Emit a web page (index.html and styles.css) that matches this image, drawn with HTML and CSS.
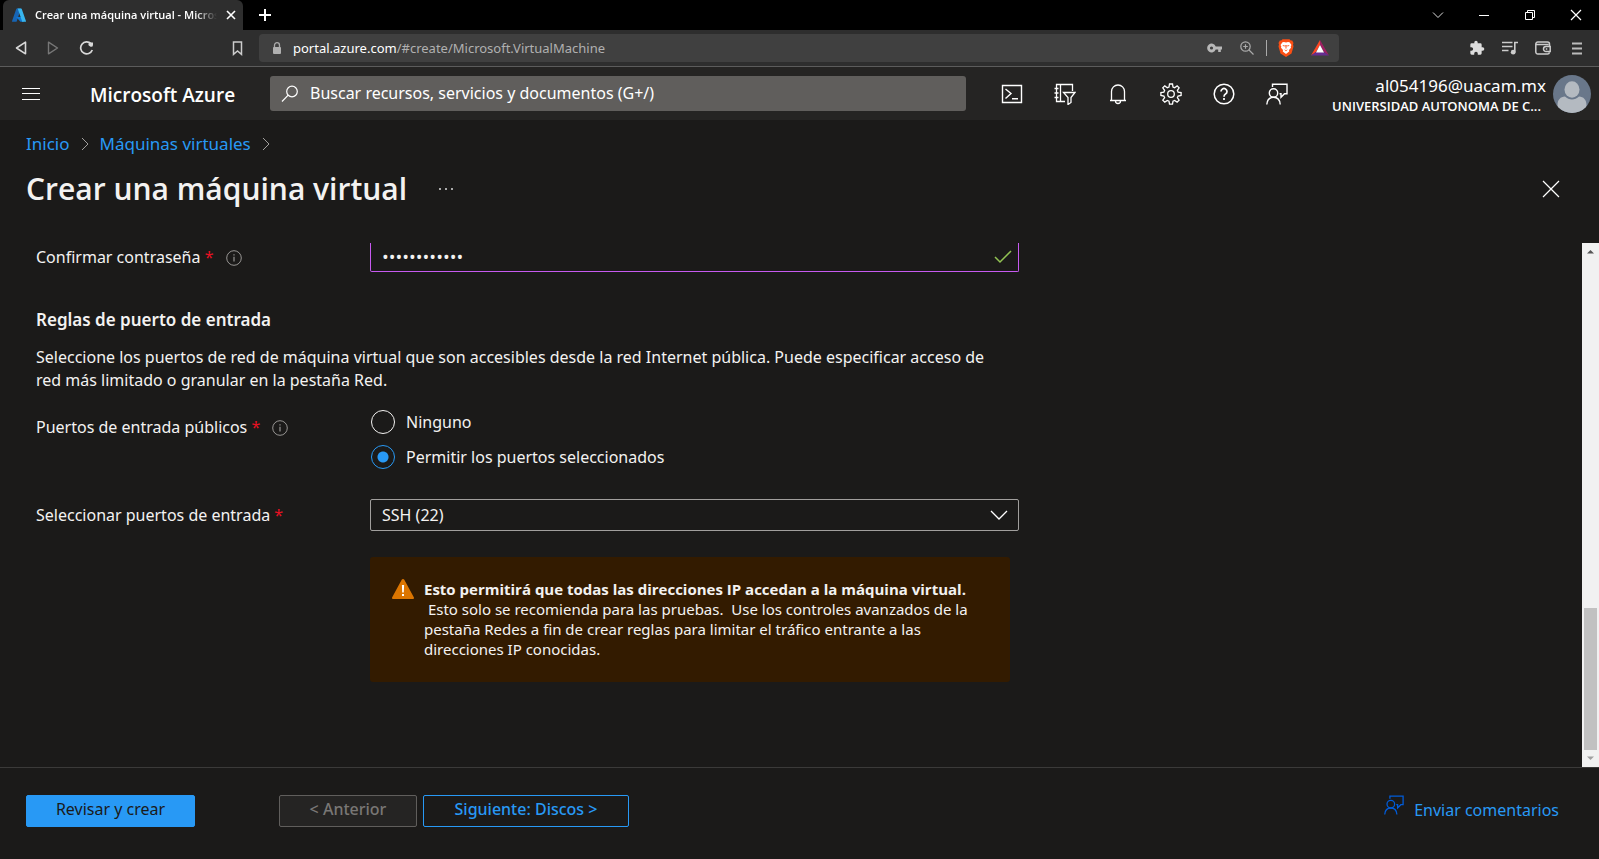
FILE: index.html
```html
<!DOCTYPE html>
<html lang="es">
<head>
<meta charset="utf-8">
<meta name="viewport" content="width=device-width, initial-scale=1">
<title>Crear una máquina virtual - Microsoft Azure</title>
<link rel="stylesheet" href="styles.css">
</head>
<body class="page">
<svg class="symbols" width="0" height="0" aria-hidden="true">
  <symbol id="feedback" viewBox="0 0 22 22">
    <path d="M6.500 4V1.200h14.500v9.500h-2.500l-3.500 3.500v-3.500h-1.500" fill="none" stroke="currentColor" stroke-width="1.400"/>
    <circle cx="7.500" cy="10" r="4.200" fill="none" stroke="currentColor" stroke-width="1.400"/>
    <path d="M.8 21.500c.3-4.500 3-7.200 6.700-7.200s6.400 2.700 6.700 7.200" fill="none" stroke="currentColor" stroke-width="1.400"/>
  </symbol>
  <symbol id="info" viewBox="0 0 16 16">
    <circle cx="8" cy="8" r="7.300" fill="none" stroke="currentColor"/>
    <path d="M8 6.800v4.700M8 4.300v1.300" stroke="currentColor" stroke-width="1.200"/>
  </symbol>
  <symbol id="chev" viewBox="0 0 8 14"><path d="M1 1l6 6-6 6" fill="none" stroke="currentColor"/></symbol>
</svg>

<div class="tabs">
  <div class="tab">
    <svg width="14" height="14" viewBox="0 0 96 96" aria-hidden="true">
      <path d="M33 4h29L32 92a5 5 0 0 1-4 3H6a5 5 0 0 1-5-7L29 7a5 5 0 0 1 4-3z" fill="#1765b5"/>
      <path d="M72 61H28l30 33h24z" fill="#0f78d4"/>
      <path d="M63 4H36a5 5 0 0 1 4 3l28 81a5 5 0 0 1-4 7h26a5 5 0 0 0 5-7L67 7a5 5 0 0 0-4-3z" fill="#38b5ee"/>
    </svg>
    <span class="tab-title">Crear una máquina virtual - Microsoft Azure</span>
    <button class="icon-btn" aria-label="Cerrar pestaña"><svg width="10" height="10" viewBox="0 0 10 10"><path d="M1 1l8 8M9 1l-8 8" stroke="#fff" stroke-width="1.600"/></svg></button>
  </div>
  <button class="icon-btn new-tab" aria-label="Nueva pestaña"><svg width="12" height="12" viewBox="0 0 12 12"><path d="M6 0v12M0 6h12" stroke="#fff" stroke-width="2"/></svg></button>
  <div class="window-controls">
    <button class="icon-btn" aria-label="Buscar pestañas"><svg width="12" height="8" viewBox="0 0 12 8"><path d="M1 1.500l5 5 5-5" fill="none" stroke="#ddd"/></svg></button>
    <button class="icon-btn" aria-label="Minimizar"><svg width="12" height="12" viewBox="0 0 12 12"><path d="M1 6.500h10" stroke="#fff"/></svg></button>
    <button class="icon-btn" aria-label="Restaurar"><svg width="12" height="12" viewBox="0 0 12 12"><path d="M1.500 3.500h7v7h-7zM3.500 3V1.500h7v7H9" fill="none" stroke="#fff"/></svg></button>
    <button class="icon-btn" aria-label="Cerrar"><svg width="12" height="12" viewBox="0 0 12 12"><path d="M1 1l10 10M11 1L1 11" stroke="#fff" stroke-width="1.200"/></svg></button>
  </div>
</div>

<div class="toolbar">
  <div class="nav">
    <button class="icon-btn" aria-label="Atrás"><svg width="12" height="14" viewBox="0 0 12 14"><path d="M10.500 1.200v11.600L1.500 7z" fill="none" stroke="#d8d8d8" stroke-width="1.600" stroke-linejoin="round"/></svg></button>
    <button class="icon-btn" aria-label="Adelante"><svg width="12" height="14" viewBox="0 0 12 14"><path d="M1.500 1.200v11.600l9-5.800z" fill="none" stroke="#777" stroke-width="1.400" stroke-linejoin="round"/></svg></button>
    <button class="icon-btn" aria-label="Recargar"><svg width="15" height="15" viewBox="0 0 15 15"><path d="M12 2.700A6 6 0 1 0 13.300 9" fill="none" stroke="#d8d8d8" stroke-width="1.700"/><path d="M9.500 4.200a2.200 2.200 0 0 1 2.200-2.600H14v2.300a2 2 0 0 1-2.500 1.800z" fill="#d8d8d8"/></svg></button>
  </div>
  <button class="icon-btn bookmark" aria-label="Añadir marcador"><svg width="11" height="15" viewBox="0 0 11 15"><path d="M1.500 1h8v12.300l-4-3.300-4 3.300z" fill="none" stroke="#ccc" stroke-width="1.500"/></svg></button>
  <div class="address">
    <svg width="10" height="12" viewBox="0 0 10 12" aria-hidden="true"><path d="M2.500 6V3.200a2.500 2.500 0 0 1 5 0V6" fill="none" stroke="#aaa" stroke-width="1.300"/><rect x="1" y="5" width="8" height="7" rx="1" fill="#b0b0b0"/></svg>
    <span class="url"><b class="host">portal.azure.com</b>/#create/Microsoft.VirtualMachine</span>
    <svg width="15" height="10" viewBox="0 0 15 10" aria-hidden="true"><path d="M8.700 3.600H15v2.800h-1.200V9h-2.600V6.400H8.700a4.400 4.400 0 1 1 0-2.800zM4.500 3.400a1.600 1.600 0 1 0 0 3.200 1.600 1.600 0 0 0 0-3.200z" fill="#b8b8b8" fill-rule="evenodd"/></svg>
    <svg class="zoom" width="14" height="14" viewBox="0 0 14 14" aria-hidden="true"><path d="M9 9l4.500 4.500M5.500 3.200v4.600M3.200 5.500h4.600" stroke="#aaa" stroke-width="1.200"/><circle cx="5.500" cy="5.500" r="4.700" fill="none" stroke="#aaa" stroke-width="1.200"/></svg>
    <span class="separator"></span>
    <svg class="shield" width="16" height="18" viewBox="0 0 16 18" aria-hidden="true"><path d="M4.500.3h7l1.200 1.300 1.500-.1L15.500 4l-.5 1.600.5 1.800-2 7-5.500 3.500L2.500 14.400.5 7.400 1 5.600.5 4l1.300-2.500 1.500.1z" fill="#fb4f14"/><path d="M4.500 3.300L6 3l2 .6 2-.6 1.500.3 2 2.700-.8 1.200.3 1.500-2 2.400.2 1.400L8 15l-3.200-2.500.2-1.400L3 8.700l.3-1.500L2.500 6z" fill="#fff"/><path d="M4.300 6l2.600.4L6.200 7.800zM11.700 6l-2.600.4.700 1.400zM7.300 6h1.400l-.3 3.200L8 10l-.4-.8zM6 10.300l2 .9 2-.9-2 1.900z" fill="#fb4f14"/></svg>
    <svg class="bat" width="18" height="16" viewBox="0 0 18 16" aria-hidden="true"><path d="M9 0L0 15.500 5 12l4-7z" fill="#ff4724"/><path d="M9 0l9 15.500-5-3.500-4-7z" fill="#9e1f63"/><path d="M0 15.500h18L13 12H5z" fill="#662d91"/><path d="M9 5l4 7.500H5z" fill="#fff"/></svg>
  </div>
  <div class="extras">
    <button class="icon-btn" aria-label="Extensiones"><svg width="16" height="16" viewBox="0 0 24 24"><path d="M20.500 11H19V7a2 2 0 0 0-2-2h-4V3.500a2.500 2.500 0 0 0-5 0V5H4a2 2 0 0 0-2 2v3.800h1.500a2.700 2.700 0 0 1 0 5.400H2V20a2 2 0 0 0 2 2h3.800v-1.500a2.700 2.700 0 0 1 5.400 0V22H17a2 2 0 0 0 2-2v-4h1.500a2.500 2.500 0 0 0 0-5z" fill="#ddd"/></svg></button>
    <button class="icon-btn" aria-label="Lista de reproducción"><svg width="16" height="14" viewBox="0 0 16 14"><path d="M0 1.500h10.500M0 5.500h10.500M0 9.500h6.500" stroke="#ccc" stroke-width="1.500"/><path d="M12.800 11V1.500H16" fill="none" stroke="#ccc" stroke-width="1.600"/><circle cx="11.200" cy="11.200" r="2.400" fill="#ccc"/></svg></button>
    <button class="icon-btn" aria-label="Cartera"><svg width="16" height="14" viewBox="0 0 16 14"><path d="M14.500 5V3a2 2 0 0 0-2-2H3a2 2 0 0 0-2.200 2v8A2 2 0 0 0 3 13h9.500a2 2 0 0 0 2-1.500M1 3.500h12.500M15.200 5.500H11a2.300 2.300 0 0 0 0 5h4.200zM10.800 8h1.500" fill="none" stroke="#ccc" stroke-width="1.500"/></svg></button>
    <button class="icon-btn menu" aria-label="Menú"><svg width="10" height="13" viewBox="0 0 10 13"><path d="M0 1.500h10M0 6.500h10M0 11.500h10" stroke="#bbb" stroke-width="2"/></svg></button>
  </div>
</div>

<header class="portal">
  <button class="icon-btn" aria-label="Mostrar menú"><svg width="20" height="14" viewBox="0 0 20 14"><path d="M1 1.500h18M1 6.500h18M1 12.500h18" stroke="#fff"/></svg></button>
  <a class="brand" href="#">Microsoft Azure</a>
  <label class="search">
    <svg width="18" height="18" viewBox="0 0 18 18" aria-hidden="true"><circle cx="11" cy="6.500" r="5.300" fill="none" stroke="#fff" stroke-width="1.200"/><path d="M7.200 10.200L1 16.500" stroke="#fff" stroke-width="1.200"/></svg>
    <input class="search-input" type="text" aria-label="Buscar" placeholder="Buscar recursos, servicios y documentos (G+/)">
  </label>
  <nav class="portal-icons">
    <button class="icon-btn" aria-label="Cloud Shell"><svg width="22" height="22" viewBox="0 0 22 22"><path d="M1.500 2.500h19v17h-19zM4.500 6l5.500 4.500L4.500 15.500M11 15.700h6" fill="none" stroke="#fff" stroke-width="1.400"/></svg></button>
    <button class="icon-btn" aria-label="Directorios"><svg width="22" height="22" viewBox="0 0 22 22"><path d="M18.500 8V1.500h-16v17H11M6.500 1.500v17M.5 5.500h4M.5 10h4M.5 14.500h4M9.500 9.500h11.500l-4 5v5l-3 2v-7z" fill="none" stroke="#fff" stroke-width="1.300"/></svg></button>
    <button class="icon-btn" aria-label="Notificaciones"><svg width="22" height="22" viewBox="0 0 22 22"><path d="M3 17.500h16M4.500 17V8.500a6.500 6.500 0 0 1 13 0V17M8.500 18a2.500 2.500 0 0 0 5 0" fill="none" stroke="#fff" stroke-width="1.300"/></svg></button>
    <button class="icon-btn" aria-label="Configuración"><svg width="22" height="22" viewBox="0 0 22 22"><path d="M9.500 1h3l.5 3 1.600.7 2.500-1.800 2 2-1.700 2.500.7 1.700 3 .4v3l-3 .5-.7 1.600 1.700 2.500-2 2-2.500-1.700-1.600.7-.5 3h-3l-.5-3-1.700-.7-2.500 1.700-2-2 1.800-2.500-.7-1.600-3-.5v-3l3-.4.7-1.700-1.800-2.500 2-2 2.500 1.800L9 4z" fill="none" stroke="#fff" stroke-width="1.300"/><circle cx="11" cy="11" r="3.300" fill="none" stroke="#fff" stroke-width="1.300"/></svg></button>
    <button class="icon-btn" aria-label="Ayuda"><svg width="22" height="22" viewBox="0 0 22 22"><circle cx="11" cy="11" r="9.800" fill="none" stroke="#fff" stroke-width="1.500"/><path d="M8 8.500a3 3 0 1 1 4.500 2.600c-1 .6-1.500 1.100-1.500 2.700M11 15v2" fill="none" stroke="#fff" stroke-width="1.700"/></svg></button>
    <button class="icon-btn" aria-label="Comentarios"><svg class="white" width="22" height="22"><use href="#feedback"/></svg></button>
  </nav>
  <div class="account">
    <div class="who">
      <span class="mail">al054196@uacam.mx</span>
      <span class="tenant">UNIVERSIDAD AUTONOMA DE C...</span>
    </div>
    <svg width="38" height="38" viewBox="0 0 38 38" aria-hidden="true"><clipPath id="round"><circle cx="19" cy="19" r="19"/></clipPath><g clip-path="url(#round)"><path d="M0 0h38v38H0z" fill="#69778a"/><path d="M4.500 36v-6c0-5 3-8.500 7.500-8.500 2 2 4.500 3 7 3s5-1 7-3c4.500 0 7.500 3.500 7.500 8.500v6l-8 4H12z" fill="#b4bac1"/><ellipse cx="19" cy="14.500" rx="7.500" ry="8.200" fill="#b4bac1"/></g></svg>
  </div>
</header>

<nav class="crumbs">
  <a class="link" href="#">Inicio</a>
  <svg class="chev" width="8" height="14"><use href="#chev"/></svg>
  <a class="link" href="#">Máquinas virtuales</a>
  <svg class="chev" width="8" height="14"><use href="#chev"/></svg>
</nav>
<div class="title-row">
  <h1 class="title">Crear una máquina virtual</h1>
  <button class="icon-btn" aria-label="Más"><svg width="16" height="4" viewBox="0 0 16 4"><path d="M1 1h2v2H1zM7 1h2v2H7zM13 1h2v2h-2z" fill="#aaa"/></svg></button>
  <button class="icon-btn close" aria-label="Cerrar"><svg width="18" height="18" viewBox="0 0 18 18"><path d="M1 1l16 16M17 1L1 17" stroke="#fff" stroke-width="1.200"/></svg></button>
</div>

<main class="main">
  <form class="form">
    <div class="row">
      <label class="label" for="pwd">Confirmar contraseña <span class="req">*</span> <svg class="info" width="16" height="16"><use href="#info"/></svg></label>
      <div class="field password">
        <input class="field-control dots" id="pwd" type="password" value="abcdefghijkl">
        <svg width="18" height="14" viewBox="0 0 18 14" aria-hidden="true"><path d="M1 7l5 5L17 1" fill="none" stroke="#92c353" stroke-width="1.500"/></svg>
      </div>
    </div>
    <h2 class="section">Reglas de puerto de entrada</h2>
    <p class="text">Seleccione los puertos de red de máquina virtual que son accesibles desde la red Internet pública. Puede especificar acceso de red más limitado o granular en la pestaña Red.</p>
    <div class="row ports" role="radiogroup" aria-labelledby="ports-label">
      <span class="label ports-label" id="ports-label">Puertos de entrada públicos <span class="req">*</span> <svg class="info" width="16" height="16"><use href="#info"/></svg></span>
      <div class="options">
        <label class="option"><input class="radio" type="radio" name="ports">Ninguno</label>
        <label class="option"><input class="radio" type="radio" name="ports" checked>Permitir los puertos seleccionados</label>
      </div>
    </div>
    <div class="row">
      <label class="label" for="inbound">Seleccionar puertos de entrada <span class="req">*</span></label>
      <div class="field">
        <select class="field-control" id="inbound"><option>SSH (22)</option></select>
        <svg class="arrow" width="18" height="10" viewBox="0 0 18 10" aria-hidden="true"><path d="M1 1l8 8 8-8" fill="none" stroke="#fff" stroke-width="1.300"/></svg>
      </div>
    </div>
    <div class="warning">
      <svg width="22" height="20" viewBox="0 0 22 20" aria-hidden="true"><path d="M11 0c.6 0 1 .3 1.300.8l9.500 17.400c.5 1-.1 1.800-1.100 1.800H1.300C.3 20-.3 19.200.2 18.200L9.700.8C10 .3 10.400 0 11 0z" fill="#db7500"/><path d="M9.900 6h2.200l-.3 7.500h-1.600zM10 15h2v2h-2z" fill="#fff"/></svg>
      <p class="warning-text"><b class="strong">Esto permitirá que todas las direcciones IP accedan a la máquina virtual.</b><br>&nbsp;Esto solo se recomienda para las pruebas.&nbsp; Use los controles avanzados de la pestaña Redes a fin de crear reglas para limitar el tráfico entrante a las direcciones IP conocidas.</p>
    </div>
  </form>
  <div class="scroll" aria-hidden="true">
    <svg class="scroll-arrow" width="17" height="17" viewBox="0 0 17 17"><path d="M5 10.500h7L8.500 7z" fill="#555"/></svg>
    <div class="thumb"></div>
    <svg class="scroll-arrow" width="17" height="17" viewBox="0 0 17 17"><path d="M5 6.500h7L8.500 10z" fill="#a0a0a0"/></svg>
  </div>
</main>

<footer class="footer">
  <button class="btn primary">Revisar y crear</button>
  <button class="btn disabled" disabled>&lt; Anterior</button>
  <button class="btn outline">Siguiente: Discos &gt;</button>
  <a class="link feedback" href="#"><svg class="feedback-icon" width="20" height="20"><use href="#feedback"/></svg>Enviar comentarios</a>
</footer>
</body>
</html>
```
FILE: styles.css
```css
* { box-sizing: border-box; }
.page {
  margin: 0; min-height: 100vh; display: flex; flex-direction: column;
  background: #1b1a19; color: #f3f2f1;
  font: 16px/23px "Noto Sans", "Open Sans", sans-serif;
}
.symbols { position: absolute; }
.icon-btn { display: flex; align-items: center; justify-content: center; padding: 0; border: 0; background: none; flex: none; }

.tabs { display: flex; align-items: center; height: 30px; padding-left: 3px; background: #000; }
.tab { display: flex; align-items: center; gap: 9px; width: 240px; height: 30px; padding: 0 7px 0 9px; border-radius: 6px 6px 0 0; background: #2e2e2e; }
.tab-title {
  flex: 1; overflow: hidden; white-space: nowrap; color: #fff; font: 600 11px/16px "Open Sans", sans-serif;
  -webkit-mask-image: linear-gradient(to right, #000 88%, transparent); mask-image: linear-gradient(to right, #000 88%, transparent);
}
.new-tab { margin-left: 16px; }
.window-controls { display: flex; align-items: center; gap: 34px; margin-left: auto; padding-right: 17px; }

.toolbar { display: flex; align-items: center; height: 37px; border-bottom: 1px solid #5c5c5c; background: #2e2e2e; }
.nav { display: flex; gap: 20px; padding-left: 15px; }
.bookmark { margin-left: 138px; }
.address { display: flex; align-items: center; flex: 1; height: 28px; margin-left: 16px; padding: 0 10px 0 13px; border-radius: 4px; background: #404040; }
.url { flex: 1; margin-left: 11px; color: #b0b0b0; font-size: 13px; line-height: 18px; }
.host { color: #fff; font-weight: 400; }
.zoom { margin-left: 18px; }
.separator { width: 1px; height: 16px; margin: 0 11px 0 12px; background: #aaa; }
.bat { margin-left: 17px; }
.extras { display: flex; align-items: center; gap: 17px; padding: 0 17px 0 130px; }
.menu { margin-left: 4px; }

.portal { display: flex; align-items: center; height: 53px; padding: 0 8px 0 21px; background: #252423; }
.brand { width: 180px; margin-left: 49px; padding-top: 3px; color: #fff; font-family: "Open Sans", sans-serif; font-size: 19px; font-weight: 600; white-space: nowrap; text-decoration: none; }
.search { display: flex; align-items: center; gap: 11px; flex: 1; height: 35px; padding-left: 11px; border-radius: 3px; background: #605e5c; }
.search-input { flex: 1; padding: 0; border: 0; outline: 0; background: none; color: #fff; font: inherit; }
.search-input::placeholder { color: #fff; opacity: 1; }
.portal-icons { display: flex; gap: 31px; padding-left: 35px; }
.white { color: #fff; }
.account { display: flex; align-items: center; justify-content: flex-end; gap: 7px; width: 303px; color: #fff; }
.who { display: flex; flex-direction: column; padding-top: 3px; text-align: right; }
.mail { font-size: 17px; line-height: 22px; }
.tenant { padding-right: 5px; font-family: "Open Sans", sans-serif; font-size: 13px; font-weight: 600; line-height: 18px; }

.link { color: #2899f5; text-decoration: none; }
.crumbs { display: flex; align-items: center; gap: 11px; padding: 11px 26px 0; font-size: 17px; line-height: 26px; }
.chev { color: #a19f9d; }
.title-row { display: flex; align-items: center; gap: 31px; padding: 10px 39px 33px 26px; }
.title { margin: 0; font: 600 30px/43px "Open Sans", sans-serif; }
.close { margin-left: auto; }

.main { display: flex; flex: 1; }
.form { flex: 1; padding-left: 36px; }
.row { display: grid; grid-template-columns: 334px 1fr; align-items: center; max-width: 983px; }
.label { white-space: nowrap; }
.req { color: #e81123; }
.info { margin-left: 8px; color: #979593; vertical-align: -3px; }
.field { display: flex; align-items: center; height: 32px; padding-right: 6px; border: 1px solid #a19f9d; border-radius: 2px; }
.password { height: 29px; border-color: #c75af0; border-top: 0; border-radius: 0 0 2px 2px; }
.field-control { flex: 1; min-width: 0; padding: 0 0 0 11px; border: 0; outline: 0; appearance: none; background: none; color: #f3f2f1; font: inherit; }
.dots { font-family: "Open Sans", sans-serif; font-size: 18px; }
.arrow { margin-right: 4px; }
.section { margin: 36px 0 0; font-size: 17px; font-weight: 600; line-height: 24px; }
.text { max-width: 983px; margin: 14px 0 18px; padding-right: 12px; }
.ports { align-items: start; margin-bottom: 30px; }
.ports-label { padding-top: 6px; }
.options { display: flex; flex-direction: column; gap: 11px; }
.option { display: flex; align-items: center; gap: 11px; height: 24px; }
.radio { width: 24px; height: 24px; margin: 0 0 0 1px; border: 1px solid #f3f2f1; border-radius: 50%; appearance: none; }
.radio:checked { border-color: #2899f5; background: radial-gradient(circle, #2899f5 5px, transparent 6px); }
.warning { display: flex; align-items: flex-start; gap: 10px; width: 640px; margin: 26px 0 20px 334px; padding: 22px 24px 23px 22px; border-radius: 3px; background: #331b00; }
.warning-text { flex: 1; margin: 0; font-size: 15px; line-height: 20px; }
.strong { font-family: "Open Sans", sans-serif; font-weight: 700; }
.scroll { display: flex; flex-direction: column; justify-content: space-between; width: 17px; background: #f1f1f1; }
.thumb { width: 13px; height: 142px; margin: auto 2px 0; background: #c1c1c1; }

.footer { display: flex; align-items: center; height: 92px; padding: 0 40px 6px 26px; border-top: 1px solid #3b3a39; }
.btn { height: 32px; padding: 0 0 3px; border: 1px solid #2899f5; border-radius: 2px; background: none; color: #2899f5; font: inherit; font-weight: 500; line-height: 20px; }
.primary { width: 169px; margin-right: 84px; background: #2899f5; color: #1b1a19; font-weight: 400; }
.disabled { width: 138px; margin-right: 6px; border-color: #605e5c; background: #252423; color: #797775; }
.outline { width: 206px; }
.feedback { display: flex; align-items: flex-end; gap: 10px; margin-left: auto; padding-bottom: 5px; }
.feedback-icon { margin-bottom: 7px; color: #015cda; }
```
